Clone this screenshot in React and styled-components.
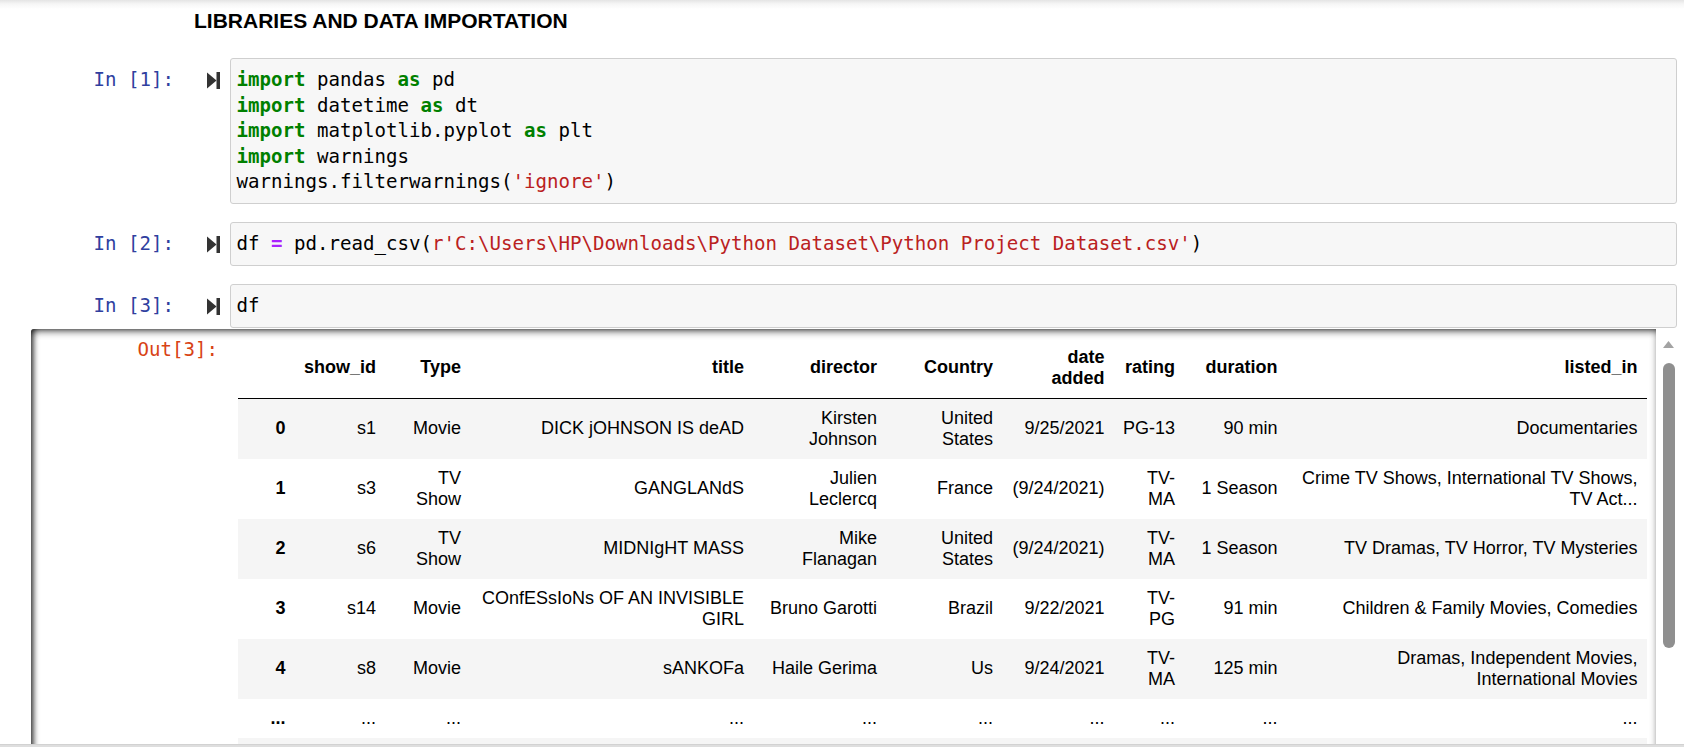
import React from "react";
import styled, { createGlobalStyle } from "styled-components";

const GlobalStyle = createGlobalStyle`
  html, body { margin: 0; padding: 0; overflow: hidden; background: #fff; }
  #root { height: 100vh; }
`;

const MONO = `"DejaVu Sans Mono", "Liberation Mono", monospace`;
const SANS = `"Liberation Sans", Arial, sans-serif`;

const Page = styled.div`
  height: 100vh;
  display: flex;
  flex-direction: column;
  overflow: hidden;
`;

const Notebook = styled.div`
  flex: 1;
  min-height: 0;
  overflow: hidden;
  padding: 0 7px 0 31px;
  background: linear-gradient(to bottom, #e4e4e4 0px, #f6f6f6 4px, #fff 9px);
`;

const Heading = styled.h4`
  margin: 0;
  padding: 8px 0 16px 163px;
  font: bold 21px/25px ${SANS};
  color: #000;
`;

const Cell = styled.div`
  padding: 9.25px 0;
  display: flex;
  flex-direction: column;
`;

const InputRow = styled.div`
  display: flex;
  align-items: flex-start;
`;

const Prompt = styled.div`
  flex: none;
  width: ${({ $w }) => $w}px;
  padding-top: ${({ $top }) => $top}px;
  text-align: right;
  font: 19.1px/25.5px ${MONO};
  color: ${({ $out }) => ($out ? "#D84315" : "#303F9F")};
  white-space: pre;
`;

const RunButton = styled.div`
  flex: none;
  width: 13px;
  height: 17px;
  margin: 14px 9.6px 0 33px;
  display: flex;
  color: #333;
`;

const CodeBox = styled.div`
  flex: 1;
  min-width: 0;
  border: 1px solid #cfcfcf;
  border-radius: 3px;
  background: #f7f7f7;
  padding: 8px 6px;
  font: 19.1px/25.5px ${MONO};
  color: #000;
  white-space: pre;
  overflow: hidden;
`;

const CodeLine = styled.div`
  height: 25.5px;
`;

const Kw = styled.span`
  color: #008000;
  font-weight: bold;
`;

const Str = styled.span`
  color: #ba2121;
`;

const Op = styled.span`
  color: #aa22ff;
  font-weight: bold;
`;

const OutputScroll = styled.div`
  margin-top: 1px;
  display: flex;
  align-items: stretch;
`;

const OutputBody = styled.div`
  flex: 1;
  min-width: 0;
  display: flex;
  align-items: flex-start;
  border-radius: 3px 0 0 0;
  box-shadow: inset 0 4px 8px -3px rgba(0, 0, 0, 0.85),
    inset 5px 0 6px -3px rgba(0, 0, 0, 0.8);
`;

const OutputSubarea = styled.div`
  flex: 1;
  min-width: 0;
  padding: 9px 9.5px 0 19.5px;
`;

const ScrollRail = styled.div`
  flex: none;
  width: 21px;
  box-sizing: border-box;
  padding: 12.4px 2px 0 6px;
  display: flex;
  flex-direction: column;
  align-items: center;
  background: #fff;
`;

const ScrollThumb = styled.div`
  width: 12px;
  height: 285px;
  margin-top: 14.7px;
  border-radius: 6px;
  background: #8f8f8f;
`;

const Table = styled.table`
  width: 1409px;
  table-layout: fixed;
  border-collapse: collapse;
  border-spacing: 0;
  font-family: ${SANS};
  font-size: 18px;
  color: #000;
`;

const Col = styled.col`
  ${({ $w }) => ($w ? `width: ${$w}px;` : "")}
`;

const Head = styled.thead`
  border-bottom: 1px solid #000;
`;

const BodyRow = styled.tr`
  &:nth-child(odd) {
    background: #f5f5f5;
  }
`;

const Th = styled.th`
  text-align: right;
  vertical-align: middle;
  padding: 9px;
  font-weight: bold;
  line-height: normal;
`;

const Td = styled.td`
  text-align: right;
  vertical-align: middle;
  padding: 9px;
  line-height: normal;
`;

const BottomBar = styled.div`
  flex: none;
  height: 3px;
  background: #dedede;
  border-top: 1px solid #d2d2d2;
  box-sizing: border-box;
`;

const StepIcon = () => (
  <svg width="13" height="17" viewBox="0 0 13 17">
    <polygon points="0,0.5 9.5,8.5 0,16.5" fill="currentColor" />
    <rect x="9.5" y="0" width="3.5" height="17" fill="currentColor" />
  </svg>
);

const UpArrow = () => (
  <svg width="11" height="7" viewBox="0 0 11 7">
    <polygon points="5.5,0 11,7 0,7" fill="#a3a3a3" />
  </svg>
);

const colWidths = [57, 90.5, 85, 283, 133, 116, 111.5, 70.5, 102.5, null];
const headers = [
  "",
  "show_id",
  "Type",
  "title",
  "director",
  "Country",
  "date added",
  "rating",
  "duration",
  "listed_in",
];

const rows = [
  ["0", "s1", "Movie", "DICK jOHNSON IS deAD", "Kirsten Johnson", "United States", "9/25/2021", "PG-13", "90 min", "Documentaries"],
  ["1", "s3", "TV Show", "GANGLANdS", "Julien Leclercq", "France", "(9/24/2021)", "TV-MA", "1 Season", "Crime TV Shows, International TV Shows, TV Act..."],
  ["2", "s6", "TV Show", "MIDNIgHT MASS", "Mike Flanagan", "United States", "(9/24/2021)", "TV-MA", "1 Season", "TV Dramas, TV Horror, TV Mysteries"],
  ["3", "s14", "Movie", "COnfESsIoNs OF AN INVISIBLE GIRL", "Bruno Garotti", "Brazil", "9/22/2021", "TV-PG", "91 min", "Children & Family Movies, Comedies"],
  ["4", "s8", "Movie", "sANKOFa", "Haile Gerima", "Us", "9/24/2021", "TV-MA", "125 min", "Dramas, Independent Movies, International Movies"],
  ["...", "...", "...", "...", "...", "...", "...", "...", "...", "..."],
  ["8785", "s8797", "TV Show", "YOKKO", "Not Given", "Pakistan", "6/23/2018", "TV-Y", "1 Season", "Kids' TV"],
  ["8786", "s8798", "TV Show", "ZAK STORM", "Not Given", "United States", "9/13/2018", "TV-Y7", "3 Seasons", "Kids' TV"],
];

const InputCell = ({ n, children }) => (
  <InputRow>
    <Prompt $w={143} $top={9}>{`In [${n}]:`}</Prompt>
    <RunButton>
      <StepIcon />
    </RunButton>
    <CodeBox>{children}</CodeBox>
  </InputRow>
);

export default function App() {
  return (
    <Page>
      <GlobalStyle />
      <Notebook>
        <Heading>LIBRARIES AND DATA IMPORTATION</Heading>

        <Cell>
          <InputCell n={1}>
            <CodeLine>
              <Kw>import</Kw> pandas <Kw>as</Kw> pd
            </CodeLine>
            <CodeLine>
              <Kw>import</Kw> datetime <Kw>as</Kw> dt
            </CodeLine>
            <CodeLine>
              <Kw>import</Kw> matplotlib.pyplot <Kw>as</Kw> plt
            </CodeLine>
            <CodeLine>
              <Kw>import</Kw> warnings
            </CodeLine>
            <CodeLine>
              warnings.filterwarnings(<Str>'ignore'</Str>)
            </CodeLine>
          </InputCell>
        </Cell>

        <Cell>
          <InputCell n={2}>
            <CodeLine>
              df <Op>=</Op> pd.read_csv(
              <Str>{"r'C:\\Users\\HP\\Downloads\\Python Dataset\\Python Project Dataset.csv'"}</Str>)
            </CodeLine>
          </InputCell>
        </Cell>

        <Cell>
          <InputCell n={3}>
            <CodeLine>df</CodeLine>
          </InputCell>
          <OutputScroll>
            <OutputBody>
              <Prompt $w={187} $top={8.4} $out>
                Out[3]:
              </Prompt>
              <OutputSubarea>
                <Table>
                  <colgroup>
                    {colWidths.map((w, i) => (
                      <Col key={i} $w={w} />
                    ))}
                  </colgroup>
                  <Head>
                    <tr>
                      {headers.map((h, i) => (
                        <Th key={i}>{h}</Th>
                      ))}
                    </tr>
                  </Head>
                  <tbody>
                    {rows.map((r, i) => (
                      <BodyRow key={i}>
                        <Th>{r[0]}</Th>
                        {r.slice(1).map((c, j) => (
                          <Td key={j}>{c}</Td>
                        ))}
                      </BodyRow>
                    ))}
                  </tbody>
                </Table>
              </OutputSubarea>
            </OutputBody>
            <ScrollRail>
              <UpArrow />
              <ScrollThumb />
            </ScrollRail>
          </OutputScroll>
        </Cell>
      </Notebook>
      <BottomBar />
    </Page>
  );
}
